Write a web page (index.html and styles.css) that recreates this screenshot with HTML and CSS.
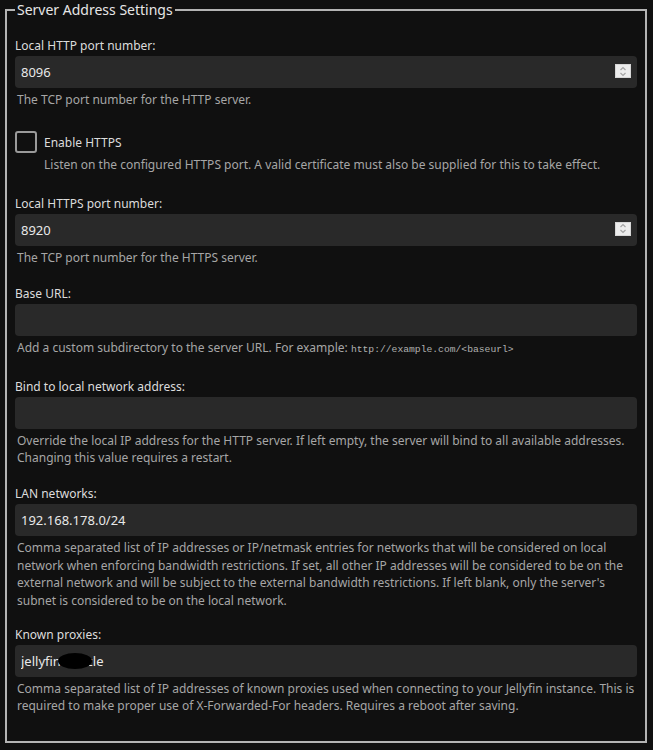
FILE: index.html
```html
<!DOCTYPE html>
<html lang="en">
<head>
<meta charset="utf-8">
<title>Server Address Settings</title>
<link rel="stylesheet" href="styles.css">
</head>
<body>
<fieldset class="settings">
  <legend class="legend">Server Address Settings</legend>

  <div class="field">
    <label class="label" for="httpPort">Local HTTP port number:</label>
    <div class="input-wrap">
      <input class="input" id="httpPort" type="text" value="8096">
      <span class="spinner"><svg width="8" height="11" viewBox="0 0 8 11"><path d="M1.5 4 L4 1.5 L6.5 4" fill="none" stroke="#a4a4a4" stroke-width="1.2"/><path d="M1.5 7 L4 9.5 L6.5 7" fill="none" stroke="#a4a4a4" stroke-width="1.2"/></svg></span>
    </div>
    <div class="desc">The TCP port number for the HTTP server.</div>
  </div>

  <div class="field check-field">
    <label class="check-row">
      <span class="checkbox"></span>
      <span class="check-label">Enable HTTPS</span>
    </label>
    <div class="desc check-desc">Listen on the configured HTTPS port. A valid certificate must also be supplied for this to take effect.</div>
  </div>

  <div class="field">
    <label class="label" for="httpsPort">Local HTTPS port number:</label>
    <div class="input-wrap">
      <input class="input" id="httpsPort" type="text" value="8920">
      <span class="spinner"><svg width="8" height="11" viewBox="0 0 8 11"><path d="M1.5 4 L4 1.5 L6.5 4" fill="none" stroke="#a4a4a4" stroke-width="1.2"/><path d="M1.5 7 L4 9.5 L6.5 7" fill="none" stroke="#a4a4a4" stroke-width="1.2"/></svg></span>
    </div>
    <div class="desc">The TCP port number for the HTTPS server.</div>
  </div>

  <div class="field">
    <label class="label" for="baseUrl">Base URL:</label>
    <div class="input-wrap">
      <input class="input" id="baseUrl" type="text" value="">
    </div>
    <div class="desc">Add a custom subdirectory to the server URL. For example: <code class="code">http://example.com/&lt;baseurl&gt;</code></div>
  </div>

  <div class="field">
    <label class="label" for="bindAddr">Bind to local network address:</label>
    <div class="input-wrap">
      <input class="input" id="bindAddr" type="text" value="">
    </div>
    <div class="desc">Override the local IP address for the HTTP server. If left empty, the server will bind to all available addresses. Changing this value requires a restart.</div>
  </div>

  <div class="field lan-field">
    <label class="label" for="lan">LAN networks:</label>
    <div class="input-wrap">
      <input class="input" id="lan" type="text" value="192.168.178.0/24">
    </div>
    <div class="desc">Comma separated list of IP addresses or IP/netmask entries for networks that will be considered on local network when enforcing bandwidth restrictions. If set, all other IP addresses will be considered to be on the external network and will be subject to the external bandwidth restrictions. If left blank, only the server's subnet is considered to be on the local network.</div>
  </div>

  <div class="field last">
    <label class="label" for="proxies">Known proxies:</label>
    <div class="input-wrap">
      <input class="input" id="proxies" type="text" value="jellyfin.xabcle">
      <span class="redact"></span>
    </div>
    <div class="desc">Comma separated list of IP addresses of known proxies used when connecting to your Jellyfin instance. This is required to make proper use of X-Forwarded-For headers. Requires a reboot after saving.</div>
  </div>
</fieldset>
</body>
</html>
```

FILE: styles.css
```css
html, body {
  margin: 0;
  padding: 0;
  background: #101010;
}

body {
  font-family: "Noto Sans", "Open Sans", sans-serif;
  color: #e0e0e0;
  padding: 0 6px 0 5px;
}

.settings {
  margin: 0;
  border: 2px solid #b4b4b4;
  padding: 18px 8px 26px 8px;
  min-width: 0;
}

.legend {
  font-size: 14px;
  line-height: 19px;
  padding: 0 2px;
  color: #e6e6e6;
}

.field {
  margin-bottom: 19px;
}

.field.last {
  margin-bottom: 0;
}

.lan-field {
  margin-bottom: 17px;
}

.label {
  display: block;
  font-size: 12px;
  line-height: 17px;
  color: #dcdcdc;
  margin-bottom: 2px;
}

.input-wrap {
  position: relative;
}

.input {
  display: block;
  box-sizing: border-box;
  width: 100%;
  height: 32px;
  margin: 0;
  border: 0;
  border-radius: 4px;
  background: #292929;
  color: #e8e8e8;
  font-family: "Noto Sans", "Open Sans", sans-serif;
  font-size: 13px;
  padding: 0 6px;
  outline: none;
}

.spinner {
  position: absolute;
  right: 6px;
  top: 8px;
  width: 16px;
  height: 14px;
  box-sizing: border-box;
  background: #ececec;
  border: 1px solid #d6d6d6;
  display: flex;
  align-items: center;
  justify-content: center;
}

.spinner svg {
  display: block;
}

.redact {
  position: absolute;
  left: 43px;
  top: 8px;
  width: 34px;
  height: 16px;
  border-radius: 50%;
  background: #000;
}

.desc {
  font-size: 12px;
  line-height: 17.4px;
  color: #a6a6a6;
  margin-top: 3px;
  padding-left: 2px;
}

.check-field {
  padding-top: 4px;
  margin-bottom: 21px;
}

.check-row {
  display: flex;
  align-items: center;
  gap: 7px;
}

.checkbox {
  width: 22px;
  height: 22px;
  box-sizing: border-box;
  border: 2px solid #9a9a9a;
  border-radius: 3px;
}

.check-label {
  font-size: 12px;
  color: #dcdcdc;
}

.check-desc {
  padding-left: 29px;
  margin-top: 3px;
}

.code {
  font-family: "Liberation Mono", "DejaVu Sans Mono", monospace;
  font-size: 9.7px;
  color: #b0b0b0;
}
```
